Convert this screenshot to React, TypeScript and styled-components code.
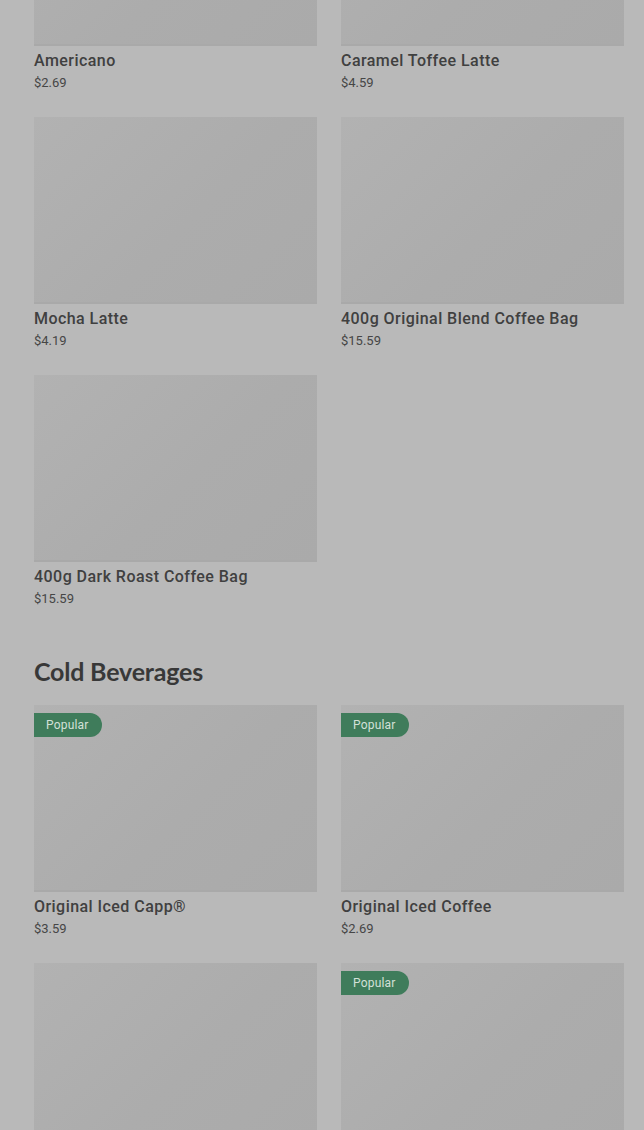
import React from "react";
import styled, { createGlobalStyle } from "styled-components";

type Product = { name?: string; price?: string; popular?: boolean };

const hotDrinks: Product[] = [
  { name: "Americano", price: "$2.69" },
  { name: "Caramel Toffee Latte", price: "$4.59" },
  { name: "Mocha Latte", price: "$4.19" },
  { name: "400g Original Blend Coffee Bag", price: "$15.59" },
  { name: "400g Dark Roast Coffee Bag", price: "$15.59" },
];

// last row sits below the fold, only the pictures are in view
const coldDrinks: Product[] = [
  { name: "Original Iced Capp®", price: "$3.59", popular: true },
  { name: "Original Iced Coffee", price: "$2.69", popular: true },
  {},
  { popular: true },
];

function ProductCard({ item }: { item: Product }) {
  return (
    <Card>
      <Thumb>{item.popular && <Badge>Popular</Badge>}</Thumb>
      {item.name && <Name>{item.name}</Name>}
      {item.price && <Price>{item.price}</Price>}
    </Card>
  );
}

function App() {
  return (
    <>
      <GlobalStyle />
      <Page>
        <Section>
          <Grid>
            {hotDrinks.map((item, i) => (
              <ProductCard key={i} item={item} />
            ))}
          </Grid>
        </Section>
        <Section>
          <Heading>Cold Beverages</Heading>
          <Grid>
            {coldDrinks.map((item, i) => (
              <ProductCard key={i} item={item} />
            ))}
          </Grid>
        </Section>
      </Page>
    </>
  );
}

const GlobalStyle = createGlobalStyle`
  html, body {
    margin: 0;
    padding: 0;
    background: #b9b9b9;
    overflow: hidden;
  }
  body {
    font-family: Roboto, "Liberation Sans", sans-serif;
    color: #3a3a3a;
  }
`;

const Page = styled.div`
  height: 1130px;
  overflow: hidden;
  padding: 0 20px 0 34px;
`;

const Section = styled.section`
  &:first-child {
    margin-top: -141px;
  }
  & + & {
    margin-top: 48px;
  }
`;

const Heading = styled.h2`
  margin: 0 0 19px;
  font-family: Lato, "Liberation Sans", sans-serif;
  font-size: 25px;
  line-height: 30px;
  font-weight: 700;
  letter-spacing: -0.2px;
  color: #383838;
`;

const Grid = styled.div`
  display: grid;
  grid-template-columns: 283px 283px;
  column-gap: 24px;
  row-gap: 25px;
`;

const Card = styled.div`
  display: flex;
  flex-direction: column;
`;

const Thumb = styled.div`
  position: relative;
  height: 187px;
  background: linear-gradient(135deg, #b2b2b2 0%, #acacac 55%, #aaaaaa 100%);
  border-bottom: 2px solid #a9a9a9;
  box-sizing: border-box;
`;

const Badge = styled.span`
  position: absolute;
  top: 8px;
  left: 0;
  height: 24px;
  padding: 0 13px 0 12px;
  display: flex;
  align-items: center;
  background: #3f7c5b;
  color: #d3e0d8;
  font-size: 12px;
  letter-spacing: 0.2px;
  border-radius: 0 12px 12px 0;
`;

const Name = styled.div`
  margin-top: 5px;
  font-size: 16px;
  line-height: 20px;
  font-weight: 500;
  letter-spacing: 0.45px;
  color: #404040;
`;

const Price = styled.div`
  margin-top: 3px;
  font-size: 13px;
  line-height: 18px;
  color: #464646;
`;

export default App;
